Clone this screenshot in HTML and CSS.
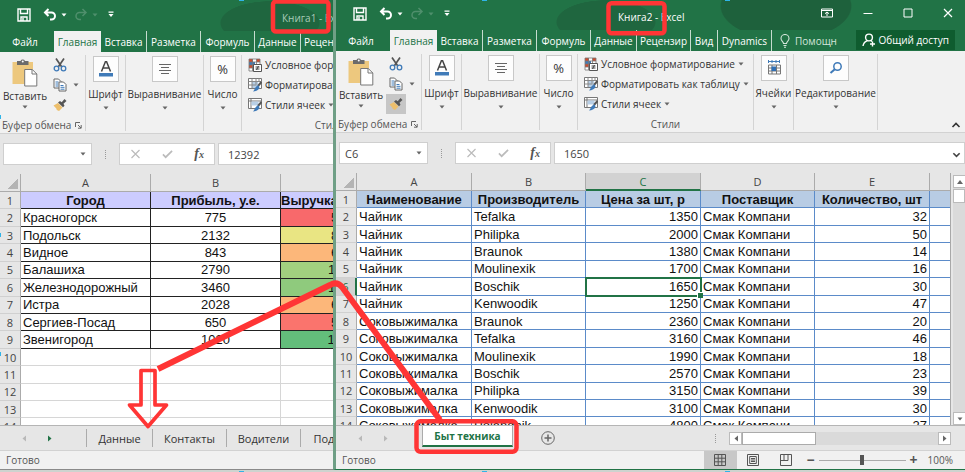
FILE: index.html
```
<!DOCTYPE html>
<html lang="ru">
<head>
    <meta charset="utf-8">
    <title>Книга2 - Excel</title>
    <link rel="stylesheet" href="styles.css">
</head>
<body>
    <svg class="sprite" aria-hidden="true">
        <symbol id="i-save" viewBox="0 0 14 14"><path d="M1 1h12v12H1zM3.500 1v4.500h7V1M4 13V9h6v4M6 10v3" fill="none" stroke="currentColor" stroke-width="1.400"/></symbol>
        <symbol id="i-undo" viewBox="0 0 14 14"><path d="M5.500 1L2 4.500 5.500 8M2 4.500h6.500a3.500 3.500 0 0 1 0 7H7" fill="none" stroke="currentColor" stroke-width="2"/></symbol>
        <symbol id="i-redo" viewBox="0 0 14 14"><path d="M8.500 1L12 4.500 8.500 8M12 4.500H5.500a3.500 3.500 0 0 0 0 7H7" fill="none" stroke="currentColor" stroke-width="1.500"/></symbol>
        <symbol id="i-caret" viewBox="0 0 6 4"><path d="M0.500 0.500h5L3 3.500z" fill="currentColor"/></symbol>
        <symbol id="i-qat" viewBox="0 0 6 7"><path d="M0.500 0.500h5v1.200h-5zM0.500 3h5L3 6z" fill="currentColor"/></symbol>
        <symbol id="i-paste" viewBox="0 0 26 28">
            <path d="M0.500 3H21v22H0.500z" fill="#edc87e"/>
            <path d="M5 2h3.500a2.500 2.500 0 0 1 4.500 0h3.500v4H5z" fill="#6b6b6b"/>
            <circle cx="10.750" cy="2.500" r="1" fill="#fff"/>
            <path d="M12.700 10.500h7.600l4.500 4.500v12H12.700z" fill="#fff" stroke="#777"/>
            <path d="M20 10.500V15h4.800" fill="none" stroke="#777"/>
        </symbol>
        <symbol id="i-cut" viewBox="0 0 14 14">
            <path d="M3 0.500l5.800 8.500M11 0.500L5.200 9" stroke="#555" stroke-width="1.700" fill="none"/>
            <circle cx="3.500" cy="10.500" r="2.300" fill="none" stroke="#3f7ab8" stroke-width="1.300"/>
            <circle cx="10.500" cy="10.500" r="2.300" fill="none" stroke="#3f7ab8" stroke-width="1.300"/>
        </symbol>
        <symbol id="i-copy" viewBox="0 0 14 14">
            <path d="M1 1h4.500L8 3.500V10H1z" fill="#fff" stroke="#666"/>
            <path d="M2.500 4h3M2.500 6h3M2.500 8h3" stroke="#3f7ab8"/>
            <path d="M6 4h4.500L13 6.500V13H6z" fill="#fff" stroke="#666"/>
            <path d="M7.500 7.500h3M7.500 9.300h4M7.500 11.200h4" stroke="#3f7ab8"/>
        </symbol>
        <symbol id="i-brush" viewBox="0 0 14 14">
            <path d="M0.500 7.500L5 5l4.500 4.500L6 13 3.800 12l-.5-1.500z" fill="#edbf6c"/>
            <path d="M5 4.500L7 3l1.700 1.200L11.500 1 13.500 3l-3 2.700 1 2-1.500 1.600z" fill="#555"/>
        </symbol>
        <symbol id="i-font" viewBox="0 0 16 16">
            <path d="M3.500 10.500L7.400 0.800h1.200l3.900 9.700M5 7h6" fill="none" stroke="#444" stroke-width="1.500"/>
            <path d="M1 12h14v3.500H1z" fill="#3f7ab8"/>
        </symbol>
        <symbol id="i-align" viewBox="0 0 16 16"><path d="M2 3.500h12M4 6.500h8M2 9.500h12M4 12.500h8" stroke="#666"/></symbol>
        <symbol id="i-cond" viewBox="0 0 14 14">
            <path d="M1 1h11v12H1z" fill="#fff"/>
            <path d="M1 1h4v3H1zM1 7h4v3H1z" fill="#cf4a2c"/><path d="M8.500 1H12v3H8.500z" fill="#cf4a2c"/><path d="M1 4h6v3H1z" fill="#3f7ab8"/>
            <path d="M1 1h11v12H1zM1 4h11M1 7h5M1 10h5M4.500 1v12M8.500 1v5" fill="none" stroke="#777" stroke-width=".8"/>
            <path d="M5.500 6.500h8v7h-8z" fill="#fff" stroke="#555"/><path d="M7.500 9h4M7.500 11h4M10.500 8l-2 4" stroke="#444"/>
        </symbol>
        <symbol id="i-format" viewBox="0 0 14 14">
            <path d="M0.500 0.500h13v10H0.500z" fill="#fff" stroke="#777"/><path d="M4 4h6v6H4z" fill="#b8cfe6"/>
            <path d="M0.500 3.500h13M0.500 7h8M4 0.500v10M8 0.500v6M11 0.500v3" stroke="#888"/>
            <path d="M13.500 4L10 8" stroke="#555" stroke-width="2"/><path d="M10.500 7.500c2 1.500 1 5.500-5.500 6 2-1.500 1.500-5 5.500-6z" fill="#3f7ab8"/>
        </symbol>
        <symbol id="i-style" viewBox="0 0 14 14">
            <path d="M0.500 0.500h13v10H0.500zM0.500 3h13M3 0.500v10" fill="#fff" stroke="#777"/><path d="M3.500 3.500h7v4h-7z" fill="#b8cfe6"/>
            <path d="M13.500 4L10 8" stroke="#555" stroke-width="2"/><path d="M10.500 7.500c2 1.500 1 5.500-5.500 6 2-1.500 1.500-5 5.500-6z" fill="#3f7ab8"/>
        </symbol>
        <symbol id="i-cells" viewBox="0 0 16 16">
            <path d="M2.500 0v3M13.500 0v3M3 1.500h10M6 0v3M10 0v3" stroke="#3f7ab8" fill="none"/>
            <path d="M2.500 5h12v9h-12zM2.500 8h12M2.500 11h12M6 5v9M10.500 5v9" fill="#fff" stroke="#777"/>
            <path d="M5.500 6.500H10V11H5.500z" fill="#2f6fb5"/>
        </symbol>
        <symbol id="i-find" viewBox="0 0 16 16"><circle cx="9.500" cy="6.500" r="3.700" fill="none" stroke="#3f7ab8" stroke-width="1.500"/><path d="M6.800 9.200L2.500 13" stroke="#3f7ab8" stroke-width="2"/></symbol>
        <symbol id="i-launch" viewBox="0 0 7 7"><path d="M0.500 5V0.500H5M3 3l3 3M6.200 3v3.200H3" fill="none" stroke="#666"/></symbol>
        <symbol id="i-bulb" viewBox="0 0 10 14"><path d="M3.500 9.500C3.500 7.500 1 7 1 4.500a4 4 0 0 1 8 0C9 7 6.500 7.500 6.500 9.500zM3.500 11.500h3M4 13.200h2" fill="none" stroke="currentColor" stroke-width="1.100"/></symbol>
        <symbol id="i-person" viewBox="0 0 14 14"><circle cx="7" cy="4.500" r="3.400" fill="none" stroke="currentColor" stroke-width="1.400"/><path d="M1 13c.5-3 2-4.500 4-5.200M8.800 7.500l1.200 1M10.500 8.500v5M8 11h5" fill="none" stroke="currentColor" stroke-width="1.400"/></symbol>
        <symbol id="i-ribbon" viewBox="0 0 12 10"><path d="M0.500 1h11v8h-11zM0.500 2.500h11M6 8V4M4 5.700L6 4l2 1.700" fill="none" stroke="currentColor"/></symbol>
        <symbol id="i-min" viewBox="0 0 10 10"><path d="M0.500 5.500h9" stroke="currentColor"/></symbol>
        <symbol id="i-max" viewBox="0 0 10 10"><path d="M1 1h8v8H1z" fill="none" stroke="currentColor"/></symbol>
        <symbol id="i-x" viewBox="0 0 10 10"><path d="M1 1l8 8M9 1L1 9" stroke="currentColor" stroke-width="1.200"/></symbol>
        <symbol id="i-check" viewBox="0 0 12 10"><path d="M1 5.500L4 8.500 11 1.500" fill="none" stroke="currentColor" stroke-width="1.800"/></symbol>
        <symbol id="i-up" viewBox="0 0 10 6"><path d="M1.500 5L5 1.500 8.500 5" fill="none" stroke="currentColor" stroke-width="1.600"/></symbol>
        <symbol id="i-down" viewBox="0 0 10 6"><path d="M1.500 1L5 4.500 8.500 1" fill="none" stroke="currentColor" stroke-width="1.800"/></symbol>
        <symbol id="i-left" viewBox="0 0 4 6"><path d="M4 0v6L0.500 3z" fill="currentColor"/></symbol>
        <symbol id="i-right" viewBox="0 0 4 6"><path d="M0 0v6l3.500-3z" fill="currentColor"/></symbol>
        <symbol id="i-tri-up" viewBox="0 0 6 4"><path d="M0 4h6L3 0z" fill="currentColor"/></symbol>
        <symbol id="i-add" viewBox="0 0 14 14"><circle cx="7" cy="7" r="6.300" fill="none" stroke="currentColor"/><path d="M7 3.500v7M3.500 7h7" stroke="currentColor" stroke-width="1.500"/></symbol>
        <symbol id="i-grid" viewBox="0 0 12 12"><path d="M0.500 0.500h11v11H0.500zM4.200 0.500v11M7.800 0.500v11M0.500 4.200h11M0.500 7.800h11" fill="none" stroke="currentColor"/></symbol>
        <symbol id="i-page" viewBox="0 0 12 12"><path d="M0.500 0.500h11v11H0.500zM2.700 2.500h6.600v7H2.700zM4 4.500h4M4 6h4M4 7.500h4" fill="none" stroke="currentColor"/></symbol>
        <symbol id="i-break" viewBox="0 0 12 12"><path d="M0.500 0.500h11v11H0.500zM4 0.500v6M8 0.500v6M0.500 6.500H8" fill="none" stroke="currentColor"/></symbol>
    </svg>

    <main class="desktop">
        <section class="window window-back">
            <header class="titlebar">
                <button class="qat save" aria-label="Сохранить"><svg><use href="#i-save"/></svg></button>
                <button class="qat undo" aria-label="Отменить"><svg><use href="#i-undo"/></svg><svg class="caret"><use href="#i-caret"/></svg></button>
                <button class="qat redo" aria-label="Вернуть"><svg><use href="#i-redo"/></svg><svg class="caret"><use href="#i-caret"/></svg></button>
                <button class="qat more" aria-label="Настройка панели"><svg><use href="#i-qat"/></svg></button>
                <h1 class="title">Книга1 - Excel</h1>
            </header>
            <nav class="tabs">
                <button class="tab file">Файл</button>
                <button class="tab active">Главная</button>
                <button class="tab w-46">Вставка</button>
                <button class="tab w-54">Разметка</button>
                <button class="tab w-54">Формуль</button>
                <button class="tab w-46">Данные</button>
                <button class="tab w-54">Рецензир</button>
            </nav>
            <div class="ribbon">
                <div class="group clipboard">
                    <div class="tools">
                        <button class="paste"><svg class="paste-icon"><use href="#i-paste"/></svg>Вставить<svg class="caret"><use href="#i-caret"/></svg></button>
                        <div class="stack">
                            <button class="mini" aria-label="Вырезать"><svg><use href="#i-cut"/></svg></button>
                            <button class="mini" aria-label="Копировать"><svg><use href="#i-copy"/></svg><svg class="caret"><use href="#i-caret"/></svg></button>
                            <button class="mini" aria-label="Формат по образцу"><svg><use href="#i-brush"/></svg></button>
                        </div>
                    </div>
                    <div class="group-name">Буфер обмена<svg class="launch"><use href="#i-launch"/></svg></div>
                </div>
                <div class="group font"><button class="big"><span class="box"><svg><use href="#i-font"/></svg></span>Шрифт<svg class="caret"><use href="#i-caret"/></svg></button></div>
                <div class="group align"><button class="big"><span class="box"><svg><use href="#i-align"/></svg></span>Выравнивание<svg class="caret"><use href="#i-caret"/></svg></button></div>
                <div class="group number"><button class="big"><span class="box">%</span>Число<svg class="caret"><use href="#i-caret"/></svg></button></div>
                <div class="group styles">
                    <div class="list">
                        <button class="row"><svg><use href="#i-cond"/></svg>Условное форматирование<svg class="caret"><use href="#i-caret"/></svg></button>
                        <button class="row"><svg><use href="#i-format"/></svg>Форматировать как таблицу<svg class="caret"><use href="#i-caret"/></svg></button>
                        <button class="row"><svg><use href="#i-style"/></svg>Стили ячеек<svg class="caret"><use href="#i-caret"/></svg></button>
                    </div>
                    <div class="group-name">Стили</div>
                </div>
            </div>
            <div class="formula-bar">
                <label class="name-box"><input type="text" aria-label="Имя"><svg class="caret"><use href="#i-caret"/></svg></label>
                <span class="dots"></span>
                <div class="fx-box">
                    <button aria-label="Отмена"><svg><use href="#i-x"/></svg></button>
                    <button aria-label="Ввод"><svg><use href="#i-check"/></svg></button>
                    <button class="fx" aria-label="Вставить функцию">f<small>x</small></button>
                </div>
                <input class="formula" type="text" value="12392" aria-label="Строка формул">
            </div>
            <div class="sheet">
                <div class="cells">
                    <table class="grid cities">
                        <colgroup><col class="c-num"><col class="c-130"><col class="c-130"><col class="c-130"></colgroup>
                        <thead><tr><th class="corner"></th><th>A</th><th>B</th><th>C</th></tr></thead>
                        <tbody>
                            <tr class="names"><th>1</th><td>Город</td><td>Прибыль, у.е.</td><td>Выручка, у.е.</td></tr>
                            <tr><th>2</th><td>Красногорск</td><td>775</td><td class="heat-1">5210</td></tr>
                            <tr><th>3</th><td>Подольск</td><td>2132</td><td class="heat-4">8740</td></tr>
                            <tr><th>4</th><td>Видное</td><td>843</td><td class="heat-3">6930</td></tr>
                            <tr><th>5</th><td>Балашиха</td><td>2790</td><td class="heat-5">11045</td></tr>
                            <tr><th>6</th><td>Железнодорожный</td><td>3460</td><td class="heat-6">11580</td></tr>
                            <tr><th>7</th><td>Истра</td><td>2028</td><td class="heat-3">6890</td></tr>
                            <tr><th>8</th><td>Сергиев-Посад</td><td>650</td><td class="heat-2">5460</td></tr>
                            <tr><th>9</th><td>Звенигород</td><td>1020</td><td class="heat-7">12392</td></tr>
                            <tr class="blank"><th>10</th><td></td><td></td><td></td></tr>
                            <tr class="blank"><th>11</th><td></td><td></td><td></td></tr>
                            <tr class="blank"><th>12</th><td></td><td></td><td></td></tr>
                            <tr class="blank"><th>13</th><td></td><td></td><td></td></tr>
                            <tr class="blank"><th>14</th><td></td><td></td><td></td></tr>
                        </tbody>
                    </table>
                </div>
            </div>
            <div class="sheet-tabs">
                <div class="sheet-nav">
                    <button aria-label="Назад"><svg><use href="#i-left"/></svg></button>
                    <button class="on" aria-label="Вперёд"><svg><use href="#i-right"/></svg></button>
                </div>
                <button class="sheet-tab w-66">Данные</button>
                <button class="sheet-tab w-74">Контакты</button>
                <button class="sheet-tab w-74">Водители</button>
                <button class="sheet-tab w-66">Подряд</button>
            </div>
            <footer class="status"><span>Готово</span></footer>
        </section>

        <section class="window window-front">
            <header class="titlebar">
                <button class="qat save" aria-label="Сохранить"><svg><use href="#i-save"/></svg></button>
                <button class="qat undo" aria-label="Отменить"><svg><use href="#i-undo"/></svg><svg class="caret"><use href="#i-caret"/></svg></button>
                <button class="qat redo" aria-label="Вернуть"><svg><use href="#i-redo"/></svg><svg class="caret"><use href="#i-caret"/></svg></button>
                <button class="qat more" aria-label="Настройка панели"><svg><use href="#i-qat"/></svg></button>
                <h1 class="title">Книга2 - Excel</h1>
                <div class="controls">
                    <button aria-label="Параметры ленты"><svg class="wide"><use href="#i-ribbon"/></svg></button>
                    <button aria-label="Свернуть"><svg><use href="#i-min"/></svg></button>
                    <button aria-label="Развернуть"><svg><use href="#i-max"/></svg></button>
                    <button aria-label="Закрыть"><svg><use href="#i-x"/></svg></button>
                </div>
            </header>
            <nav class="tabs">
                <button class="tab file">Файл</button>
                <button class="tab active">Главная</button>
                <button class="tab w-46">Вставка</button>
                <button class="tab w-54">Разметка</button>
                <button class="tab w-54">Формуль</button>
                <button class="tab w-46">Данные</button>
                <button class="tab w-54">Рецензир</button>
                <button class="tab w-27">Вид</button>
                <button class="tab w-54">Dynamics</button>
                <button class="help"><svg><use href="#i-bulb"/></svg>Помощн</button>
                <button class="share"><svg><use href="#i-person"/></svg>Общий доступ</button>
            </nav>
            <div class="ribbon">
                <div class="group clipboard">
                    <div class="tools">
                        <button class="paste"><svg class="paste-icon"><use href="#i-paste"/></svg>Вставить<svg class="caret"><use href="#i-caret"/></svg></button>
                        <div class="stack">
                            <button class="mini" aria-label="Вырезать"><svg><use href="#i-cut"/></svg></button>
                            <button class="mini" aria-label="Копировать"><svg><use href="#i-copy"/></svg><svg class="caret"><use href="#i-caret"/></svg></button>
                            <button class="mini pressed" aria-label="Формат по образцу"><svg><use href="#i-brush"/></svg></button>
                        </div>
                    </div>
                    <div class="group-name">Буфер обмена<svg class="launch"><use href="#i-launch"/></svg></div>
                </div>
                <div class="group font"><button class="big"><span class="box"><svg><use href="#i-font"/></svg></span>Шрифт<svg class="caret"><use href="#i-caret"/></svg></button></div>
                <div class="group align"><button class="big"><span class="box"><svg><use href="#i-align"/></svg></span>Выравнивание<svg class="caret"><use href="#i-caret"/></svg></button></div>
                <div class="group number"><button class="big"><span class="box">%</span>Число<svg class="caret"><use href="#i-caret"/></svg></button></div>
                <div class="group styles">
                    <div class="list">
                        <button class="row"><svg><use href="#i-cond"/></svg>Условное форматирование<svg class="caret"><use href="#i-caret"/></svg></button>
                        <button class="row"><svg><use href="#i-format"/></svg>Форматировать как таблицу<svg class="caret"><use href="#i-caret"/></svg></button>
                        <button class="row"><svg><use href="#i-style"/></svg>Стили ячеек<svg class="caret"><use href="#i-caret"/></svg></button>
                    </div>
                    <div class="group-name">Стили</div>
                </div>
                <div class="group font"><button class="big"><span class="box"><svg><use href="#i-cells"/></svg></span>Ячейки<svg class="caret"><use href="#i-caret"/></svg></button></div>
                <div class="group editing"><button class="big"><span class="box"><svg><use href="#i-find"/></svg></span>Редактирование<svg class="caret"><use href="#i-caret"/></svg></button></div>
                <button class="collapse" aria-label="Свернуть ленту"><svg><use href="#i-up"/></svg></button>
            </div>
            <div class="formula-bar">
                <label class="name-box"><input type="text" value="C6" aria-label="Имя"><svg class="caret"><use href="#i-caret"/></svg></label>
                <span class="dots"></span>
                <div class="fx-box">
                    <button aria-label="Отмена"><svg><use href="#i-x"/></svg></button>
                    <button aria-label="Ввод"><svg><use href="#i-check"/></svg></button>
                    <button class="fx" aria-label="Вставить функцию">f<small>x</small></button>
                </div>
                <input class="formula" type="text" value="1650" aria-label="Строка формул">
                <button class="expand" aria-label="Развернуть строку формул"><svg><use href="#i-down"/></svg></button>
            </div>
            <div class="sheet">
                <div class="cells">
                    <table class="grid goods">
                        <colgroup><col class="c-num"><col class="c-115"><col class="c-114"><col class="c-115"><col class="c-114"><col class="c-115"><col></colgroup>
                        <thead><tr><th class="corner"></th><th>A</th><th>B</th><th class="current">C</th><th>D</th><th>E</th><th></th></tr></thead>
                        <tbody>
                            <tr class="names"><th>1</th><td>Наименование</td><td>Производитель</td><td>Цена за шт, р</td><td>Поставщик</td><td>Количество, шт</td><td></td></tr>
                            <tr><th>2</th><td>Чайник</td><td>Tefalka</td><td>1350</td><td>Смак Компани</td><td>32</td><td></td></tr>
                            <tr><th>3</th><td>Чайник</td><td>Philipka</td><td>2000</td><td>Смак Компани</td><td>50</td><td></td></tr>
                            <tr><th>4</th><td>Чайник</td><td>Braunok</td><td>1380</td><td>Смак Компани</td><td>14</td><td></td></tr>
                            <tr><th>5</th><td>Чайник</td><td>Moulinexik</td><td>1700</td><td>Смак Компани</td><td>16</td><td></td></tr>
                            <tr><th class="current">6</th><td>Чайник</td><td>Boschik</td><td class="selected">1650</td><td>Смак Компани</td><td>30</td><td></td></tr>
                            <tr><th>7</th><td>Чайник</td><td>Kenwoodik</td><td>1250</td><td>Смак Компани</td><td>47</td><td></td></tr>
                            <tr><th>8</th><td>Соковыжималка</td><td>Braunok</td><td>2360</td><td>Смак Компани</td><td>20</td><td></td></tr>
                            <tr><th>9</th><td>Соковыжималка</td><td>Tefalka</td><td>3160</td><td>Смак Компани</td><td>46</td><td></td></tr>
                            <tr><th>10</th><td>Соковыжималка</td><td>Moulinexik</td><td>1990</td><td>Смак Компани</td><td>18</td><td></td></tr>
                            <tr><th>11</th><td>Соковыжималка</td><td>Boschik</td><td>2570</td><td>Смак Компани</td><td>23</td><td></td></tr>
                            <tr><th>12</th><td>Соковыжималка</td><td>Philipka</td><td>3150</td><td>Смак Компани</td><td>39</td><td></td></tr>
                            <tr><th>13</th><td>Соковыжималка</td><td>Kenwoodik</td><td>3100</td><td>Смак Компани</td><td>30</td><td></td></tr>
                            <tr><th>14</th><td>Соковыжималка</td><td>Polandnik</td><td>4800</td><td>Смак Компани</td><td>27</td><td></td></tr>
                        </tbody>
                    </table>
                </div>
                <div class="vscroll">
                    <button aria-label="Вверх"><svg class="caret"><use href="#i-tri-up"/></svg></button>
                    <span class="thumb"></span>
                    <button class="end" aria-label="Вниз"><svg class="caret"><use href="#i-caret"/></svg></button>
                </div>
            </div>
            <div class="sheet-tabs">
                <div class="sheet-nav">
                    <button aria-label="Назад"><svg><use href="#i-left"/></svg></button>
                    <button aria-label="Вперёд"><svg><use href="#i-right"/></svg></button>
                </div>
                <button class="sheet-tab open">Быт техника</button>
                <button class="add" aria-label="Новый лист"><svg><use href="#i-add"/></svg></button>
                <span class="dots"></span>
                <div class="hscroll">
                    <button aria-label="Влево"><svg><use href="#i-left"/></svg></button>
                    <span class="thumb"></span>
                    <button class="end" aria-label="Вправо"><svg><use href="#i-right"/></svg></button>
                </div>
            </div>
            <footer class="status">
                <span>Готово</span>
                <div class="views">
                    <button class="on" aria-label="Обычный"><svg><use href="#i-grid"/></svg></button>
                    <button aria-label="Разметка страницы"><svg><use href="#i-page"/></svg></button>
                    <button aria-label="Страничный"><svg><use href="#i-break"/></svg></button>
                </div>
                <div class="zoom">
                    <button aria-label="Уменьшить">−</button>
                    <input type="range" min="0" max="100" value="50" aria-label="Масштаб">
                    <button aria-label="Увеличить">+</button>
                    <span class="percent">100%</span>
                </div>
            </footer>
        </section>

        <!-- red marks over both windows -->
        <svg class="marks" width="965" height="472" viewBox="0 0 965 472" aria-hidden="true">
            <g fill="none" stroke="#ff3535">
                <rect x="273" y="1.500" width="55.500" height="30" rx="3" stroke-width="4.500"/>
                <rect x="608.500" y="3.300" width="56" height="30" rx="3" stroke-width="4.500"/>
                <rect x="416.500" y="421.300" width="100" height="30.500" rx="4" stroke-width="4.500"/>
                <path d="M158 369L330 285Q337 281 342 287L440 420" stroke-width="6"/>
                <path d="M141 370.500h14V405h11.500L148 426.500 129.500 405H141z" stroke-width="3.700" stroke-linejoin="round"/>
            </g>
            <g fill="#2fb4e8">
                <path d="M239 0h5v1h-5zM482 0h5v1h-5zM725 0h5v1h-5zM239 471h5v1h-5zM482 471h5v1h-5zM725 471h5v1h-5z"/>
                <path d="M0 115h1v4H0zM0 233h1v4H0zM0 352h1v4H0z"/>
            </g>
        </svg>
    </main>
</body>
</html>
```

FILE: styles.css
```
* {
    box-sizing: border-box;
}
body {
    margin: 0;
    font-family: "Open Sans", "Noto Sans", sans-serif;
    font-size: 10px;
    color: #333;
}
button, input {
    margin: 0;
    padding: 0;
    border: none;
    background: none;
    font: inherit;
    color: inherit;
}
svg {
    flex: none;
    width: 14px;
    height: 14px;
}
svg.caret {
    width: 6px;
    height: 4px;
    color: #666;
}
.sprite {
    display: none;
}
.desktop {
    position: relative;
    display: flex;
    min-height: 100vh;
    overflow: hidden;
    background: #cdd3cf;
}
.marks {
    position: absolute;
    top: 0;
    left: 0;
    width: 965px;
    height: 472px;
    pointer-events: none;
}

/* windows */
.window {
    display: flex;
    flex-direction: column;
    height: 470px;
    min-height: calc(100vh - 2px);
    overflow: hidden;
    background: #e6e6e6;
}
.window-back {
    width: 333px;
    padding-top: 1px;
    background: linear-gradient(#217346 1px, #e6e6e6 1px);
    border-bottom: 1px solid #8a8a8a;
}
.window-front {
    flex: 1;
    min-width: 0;
    border-left: 3px solid #6f9f86;
    border-bottom: 1px solid #217346;
}

/* title bar */
.titlebar {
    flex: none;
    display: flex;
    align-items: center;
    height: 30px;
    padding-left: 17px;
    color: #fff;
    background:
        radial-gradient(ellipse 50px 22px at 270px 22px, #1f663f 98%, transparent),
        radial-gradient(ellipse 66px 34px at 450px 6px, #1e613c 98%, transparent),
        #217346;
}
.titlebar svg {
    display: block;
}
.qat {
    display: flex;
    align-items: center;
    gap: 4px;
    margin-bottom: 3px;
}
.titlebar .caret {
    color: inherit;
}
.undo {
    margin-left: 12px;
}
.redo {
    margin-left: 7px;
    color: #4f8f6c;
}
.more {
    margin-left: 10px;
}
.more svg {
    width: 6px;
    height: 7px;
}
.title {
    margin: 3px 0 0 168px;
    font-size: 10px;
    font-weight: normal;
    white-space: nowrap;
}
.window-back .title {
    color: #a9cbb8;
}
.controls {
    display: flex;
    margin: 0 0 4px auto;
    padding-right: 12px;
    gap: 30px;
}
.controls svg {
    width: 10px;
    height: 10px;
}
.controls svg.wide {
    width: 12px;
}

/* ribbon tabs */
.tabs {
    flex: none;
    display: flex;
    align-items: stretch;
    height: 21px;
    color: #fff;
    background: #217346;
}
.tab {
    flex: none;
    border-right: 1px solid #c6dccf;
    text-align: center;
    white-space: nowrap;
}
.tab.file {
    width: 54px;
    padding-right: 4px;
    border: none;
}
.tab.active {
    width: 47px;
    border: none;
    color: #217346;
    background: #f1f1f1;
}
.w-27 {
    width: 27px;
}
.w-46 {
    width: 46px;
}
.w-54 {
    width: 54px;
}
.help {
    display: flex;
    align-items: center;
    gap: 5px;
    margin-left: 8px;
    color: #d3e5da;
}
.help svg {
    width: 10px;
}
.share {
    display: flex;
    align-items: center;
    gap: 3px;
    height: 20px;
    margin: 0 10px 0 auto;
    padding: 0 6px;
    white-space: nowrap;
    background: #0f5c2f;
}

/* ribbon */
.ribbon {
    flex: none;
    display: flex;
    height: 82px;
    padding: 3px 0 2px;
    border-bottom: 1px solid #d2d2d2;
    background: #f1f1f1;
}
.group {
    flex: none;
    display: flex;
    flex-direction: column;
    justify-content: space-between;
    border-right: 1px solid #d4d4d4;
    white-space: nowrap;
}
.group-name {
    display: flex;
    align-items: center;
    justify-content: center;
    height: 12px;
    color: #555;
}
.clipboard {
    width: 86px;
}
.clipboard .group-name {
    justify-content: space-between;
    padding: 0 3px 0 2px;
}
.launch {
    width: 7px;
    height: 7px;
}
.font {
    width: 40px;
}
.align {
    width: 78px;
}
.number {
    width: 38px;
}
.styles {
    width: 176px;
}
.editing {
    width: 84px;
}
.tools {
    display: flex;
}
.paste {
    display: flex;
    flex-direction: column;
    align-items: center;
    width: 50px;
    padding-top: 4px;
    line-height: 18px;
}
.paste-icon {
    width: 26px;
    height: 28px;
}
.stack {
    display: flex;
    flex-direction: column;
}
.mini {
    display: flex;
    align-items: center;
    gap: 6px;
    height: 20px;
    padding: 0 3px;
}
.pressed {
    width: 20px;
    background: #c6c6c6;
}
.big {
    display: flex;
    flex-direction: column;
    align-items: center;
    padding-top: 1px;
    line-height: 24px;
}
.box {
    display: flex;
    align-items: center;
    justify-content: center;
    width: 26px;
    height: 26px;
    border: 1px solid #c8c8c8;
    background: #fdfdfd;
    font-size: 13px;
}
.box svg {
    width: 16px;
    height: 16px;
}
.row {
    display: flex;
    align-items: center;
    gap: 3px;
    height: 20px;
    padding-left: 6px;
}
.collapse {
    display: flex;
    align-items: flex-end;
    margin-left: auto;
    padding: 0 4px 2px 0;
}
.collapse svg {
    width: 10px;
    height: 6px;
}

/* formula bar */
.formula-bar {
    flex: none;
    display: flex;
    align-items: center;
    height: 40px;
    padding-left: 3px;
    color: #444;
    font-size: 11px;
}
.name-box {
    display: flex;
    align-items: center;
    width: 89px;
    height: 22px;
    padding: 0 5px;
    border: 1px solid #cfcfcf;
    background: #fff;
}
.name-box input {
    flex: 1;
    min-width: 0;
}
.dots {
    width: 1px;
    height: 9px;
    margin: 0 13px;
    border-left: 1px dotted #999;
}
.fx-box {
    display: flex;
    align-items: center;
    justify-content: space-between;
    width: 96px;
    height: 22px;
    padding: 0 10px;
    border: 1px solid #cfcfcf;
    background: #fff;
    color: #bbb;
}
.fx-box svg {
    display: block;
    width: 11px;
    height: 10px;
}
.fx {
    color: #555;
    font-family: "Liberation Serif", serif;
    font-size: 14px;
    font-style: italic;
    font-weight: bold;
}
.fx small {
    font-size: 10px;
}
.formula {
    flex: 1;
    min-width: 0;
    height: 22px;
    margin-left: 3px;
    padding-left: 9px;
    border: 1px solid #cfcfcf;
    border-right: none;
    background: #fff;
}
.expand {
    height: 22px;
    padding-right: 3px;
    border: solid #cfcfcf;
    border-width: 1px 1px 1px 0;
    background: #fff;
}
.expand svg {
    width: 9px;
    height: 6px;
}

/* sheet */
.sheet {
    flex: 1;
    display: flex;
    min-height: 0;
    border-bottom: 1px solid #b5b5b5;
}
.cells {
    flex: 1;
    min-width: 0;
    overflow: hidden;
}
.window-front .cells {
    border-right: 1px solid #a8a8a8;
}
.grid {
    table-layout: fixed;
    height: 262px;
    border-collapse: separate;
    border-spacing: 0;
    font-family: "Liberation Sans", Arial, sans-serif;
    font-size: 13px;
    line-height: 15px;
    color: #111;
}
.cities {
    width: 411px;
}
.goods {
    width: 100%;
}
.c-num {
    width: 21px;
}
.c-114 {
    width: 114px;
}
.c-115 {
    width: 115px;
}
.c-130 {
    width: 130px;
}
.grid th {
    padding: 0;
    border-right: 1px solid #ababab;
    background: #e6e6e6;
    color: #444;
    font-family: "Open Sans", "Noto Sans", sans-serif;
    font-size: 11px;
    font-weight: normal;
}
.grid thead th {
    height: 18px;
    border-bottom: 1px solid #ababab;
}
.grid thead th:last-child {
    border-right: none;
}
.grid tbody th {
    border-bottom: 1px solid #d0d0d0;
}
.grid .corner {
    background: linear-gradient(135deg, transparent 50%, #b4b4b4 50%) right 2px bottom 2px / 11px 11px no-repeat;
}
.grid td {
    padding: 0 2px;
    overflow: hidden;
    background: #fff;
    white-space: nowrap;
}
.grid .names td {
    font-weight: bold;
    text-align: center;
}
.cities td {
    border-right: 1px solid #222;
    border-bottom: 1px solid #222;
}
.cities td:nth-child(n+3) {
    text-align: center;
}
.cities .names td {
    background: #ccf;
}
.cities .names td:last-child {
    padding-left: 0;
    text-align: left;
}
.cities .blank td {
    border-color: #d6d6d6;
}
.heat-1.heat-1 { background: #f8696b; }
.heat-2.heat-2 { background: #fa746d; }
.heat-3.heat-3 { background: #fcb77a; }
.heat-4.heat-4 { background: #e9e583; }
.heat-5.heat-5 { background: #a2d07f; }
.heat-6.heat-6 { background: #8fca7d; }
.heat-7.heat-7 { background: #63be7b; }
.goods td {
    border-right: 1px solid #5b8bc9;
    border-bottom: 1px solid #5b8bc9;
}
.goods td:last-child {
    border-right: none;
}
.goods td:nth-child(4), .goods td:nth-child(6) {
    text-align: right;
}
.goods .names td {
    background: #b8cce4;
    text-align: center;
}
.goods .current {
    background: #d2d2d2;
    color: #217346;
}
.goods thead .current {
    border-bottom: 2px solid #217346;
}
.goods tbody .current {
    border-right: 2px solid #217346;
}
.goods .selected {
    position: relative;
    overflow: visible;
    outline: 2px solid #217346;
    outline-offset: -1px;
}
.selected::after {
    content: "";
    position: absolute;
    right: -3px;
    bottom: -3px;
    width: 5px;
    height: 5px;
    border: solid #fff;
    border-width: 1px 0 0 1px;
    background: #217346;
}
.vscroll {
    display: flex;
    flex-direction: column;
    width: 12px;
    margin: 2px 0 0 2px;
    background: #dadada;
}
.vscroll button, .hscroll button {
    display: flex;
    align-items: center;
    justify-content: center;
    height: 13px;
    width: 13px;
    border: 1px solid #bbb;
    background: #fff;
    color: #666;
}
.vscroll .thumb {
    height: 14px;
    margin-top: 1px;
    border: 1px solid #bbb;
    background: #fff;
}
.vscroll .end {
    margin-top: auto;
}

/* sheet tabs */
.sheet-tabs {
    flex: none;
    display: flex;
    align-items: center;
    height: 24px;
}
.sheet-nav {
    flex: none;
    display: flex;
    justify-content: space-between;
    width: 86px;
    padding: 0 34px 0 22px;
    color: #b8b8b8;
}
.sheet-nav .on {
    color: #217346;
}
.sheet-tabs svg {
    display: block;
    width: 4px;
    height: 7px;
}
.sheet-tab {
    flex: none;
    height: 18px;
    border-left: 1px solid #ababab;
    text-align: center;
    font-size: 11px;
}
.w-66 {
    width: 66px;
}
.w-74 {
    width: 74px;
}
.sheet-tab.open {
    align-self: flex-start;
    width: 91px;
    height: 21px;
    border-right: 1px solid #ababab;
    border-bottom: 2px solid #217346;
    background: #fff;
    color: #217346;
    font-size: 10px;
    font-weight: bold;
}
.add {
    margin-left: 28px;
}
.sheet-tabs .add svg {
    width: 14px;
    height: 14px;
    color: #666;
}
.sheet-tabs .dots {
    margin-left: auto;
}
.hscroll {
    display: flex;
    width: 222px;
    margin-right: 14px;
    background: #dadada;
}
.hscroll .thumb {
    width: 74px;
    border: 1px solid #ababab;
    background: #fff;
}
.hscroll .end {
    margin-left: auto;
}

/* status bar */
.status {
    flex: none;
    display: flex;
    align-items: center;
    height: 19px;
    padding-left: 6px;
    border-top: 1px solid #d2d2d2;
    background: #f1f1f1;
    color: #555;
}
.views {
    display: flex;
    align-self: stretch;
    margin-left: auto;
}
.views button {
    display: flex;
    align-items: center;
    justify-content: center;
    width: 33px;
}
.views .on {
    background: #c8c8c8;
}
.views svg {
    width: 12px;
    height: 12px;
}
.zoom {
    display: flex;
    align-items: center;
    gap: 4px;
    padding: 0 12px 0 4px;
}
.zoom button {
    font-size: 14px;
    font-weight: bold;
    line-height: 14px;
}
.zoom input {
    width: 87px;
    height: 12px;
    appearance: none;
    background: linear-gradient(#aaa, #aaa) center / 100% 1px no-repeat;
}
.zoom input::-webkit-slider-thumb {
    appearance: none;
    width: 4px;
    height: 10px;
    background: #555;
}
.percent {
    margin-left: 6px;
}
```
